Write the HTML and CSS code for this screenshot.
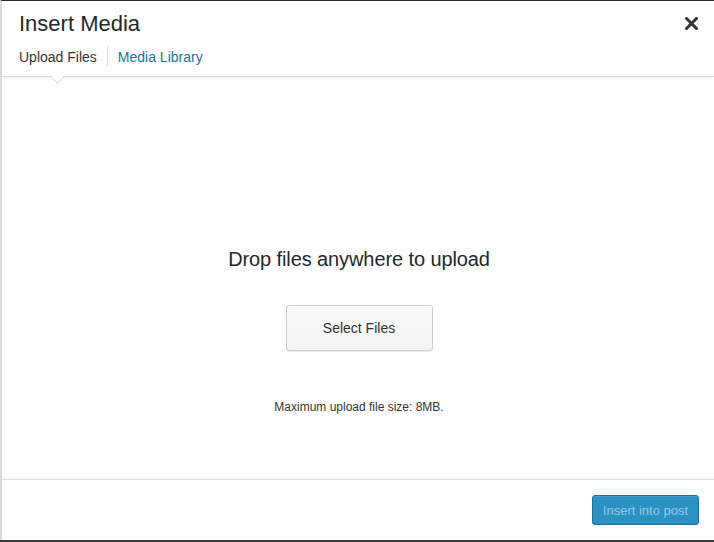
FILE: index.html
```html
<!DOCTYPE html>
<html>
<head>
<meta charset="utf-8">
<link rel="stylesheet" href="styles.css">
</head>
<body>
<div class="frame">
  <div class="modal">
    <header class="head">
      <h1 class="title">Insert Media</h1>
      <button class="close" aria-label="Close">
        <svg width="13" height="13" viewBox="0 0 13 13"><path d="M1.5 1.5 L11.5 11.5 M11.5 1.5 L1.5 11.5" stroke="#333" stroke-width="3" stroke-linecap="square"/></svg>
      </button>
      <nav class="tabs">
        <a class="tab active">Upload Files</a>
        <a class="tab">Media Library</a>
        <span class="notch"></span>
      </nav>
    </header>
    <main class="content">
      <h2 class="drop">Drop files anywhere to upload</h2>
      <button class="select">Select Files</button>
      <p class="max">Maximum upload file size: 8MB.</p>
    </main>
    <footer class="foot">
      <button class="insert">Insert into post</button>
    </footer>
  </div>
  <div class="below"></div>
</div>
</body>
</html>
```
FILE: styles.css
```css
html, body {
  margin: 0;
  padding: 0;
  background: #fff;
  font-family: "Liberation Sans", Arial, sans-serif;
  color: #333;
}
.frame {
  width: 714px;
  height: 542px;
  display: flex;
  flex-direction: column;
  overflow: hidden;
}
.modal {
  flex: 1;
  border-top: 1px solid #2b2b2b;
  border-left: 2px solid #dcdcdc;
  background: #fff;
  display: flex;
  flex-direction: column;
}
.below {
  height: 2px;
  background: #3a3a3a;
}
.head {
  position: relative;
  height: 75px;
  border-bottom: 1px solid #dddddd;
  box-shadow: 0 1px 3px rgba(0,0,0,0.06);
}
.title {
  margin: 0;
  padding: 0 17px;
  font-size: 22px;
  font-weight: normal;
  line-height: 45px;
  color: #23282d;
}
.close {
  position: absolute;
  top: 16px;
  right: 16px;
  width: 13px;
  height: 13px;
  padding: 0;
  border: 0;
  background: none;
  display: block;
}
.close svg { display: block; }
.tabs {
  position: relative;
  display: flex;
  padding-left: 17px;
  height: 30px;
}
.tab {
  font-size: 14px;
  line-height: 23px;
  height: 21px;
  color: #21759b;
  padding: 0 10px;
  border-left: 1px solid #dcdcdc;
}
.tab.active {
  color: #333;
  padding-left: 0;
  border-left: 0;
}
.notch {
  position: absolute;
  left: 51px;
  bottom: -6px;
  width: 8px;
  height: 8px;
  background: #fff;
  border-right: 1px solid #dddddd;
  border-bottom: 1px solid #dddddd;
  transform: rotate(45deg);
}
.content {
  flex: 1;
  display: flex;
  flex-direction: column;
  align-items: center;
  padding-top: 170px;
  padding-left: 2px;
}
.drop {
  margin: 0;
  font-size: 20px;
  font-weight: normal;
  line-height: 24px;
  color: #23282d;
  letter-spacing: -0.1px;
}
.select {
  margin-top: 34px;
  width: 147px;
  height: 46px;
  border: 1px solid #cccccc;
  border-radius: 3px;
  background: linear-gradient(#fafafa, #f3f3f3);
  box-shadow: inset 0 1px 0 #fff, 0 1px 0 rgba(0,0,0,0.08);
  font-family: "Liberation Sans", Arial, sans-serif;
  font-size: 14px;
  color: #333;
}
.max {
  margin: 48px 0 0;
  font-size: 12px;
  line-height: 16px;
  color: #333;
}
.foot {
  height: 60px;
  border-top: 1px solid #dddddd;
  box-shadow: 0 -1px 3px rgba(0,0,0,0.04);
  display: flex;
  justify-content: flex-end;
  align-items: center;
  padding-right: 15px;
}
.insert {
  height: 30px;
  width: 107px;
  padding: 0;
  white-space: nowrap;
  border: 1px solid #1c6f9b;
  border-radius: 3px;
  background: #2b90c2;
  box-shadow: inset 0 1px 0 rgba(120,200,230,0.35);
  color: #92cbe8;
  font-family: "Liberation Sans", Arial, sans-serif;
  font-size: 13px;
}
```
